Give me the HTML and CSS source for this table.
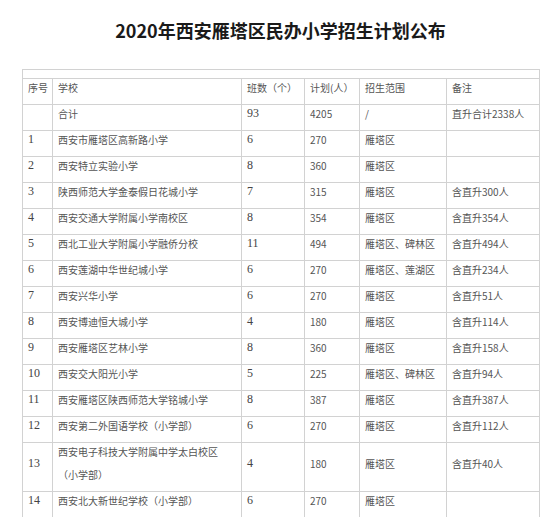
FILE: index.html
```html
<!DOCTYPE html>
<html lang="zh-CN">
<head>
<meta charset="utf-8">
<title>2020年西安雁塔区民办小学招生计划公布</title>
<link rel="stylesheet" href="styles.css">
</head>
<body>
<main class="article">
  <h1 class="title">2020年西安雁塔区民办小学招生计划公布</h1>
  <table class="grid">
    <colgroup>
      <col class="c-no"><col class="c-school"><col class="c-cls"><col class="c-plan"><col class="c-area"><col class="c-note">
    </colgroup>
    <tbody>
      <tr class="spacer"><td colspan="6"></td></tr>
      <tr><td><p>序号</p></td><td><p>学校</p></td><td><p>班数（个）</p></td><td><p>计划(人）</p></td><td><p>招生范围</p></td><td><p>备注</p></td></tr>
      <tr><td></td><td><p>合计</p></td><td class="num"><p>93</p></td><td><p>4205</p></td><td><p>/</p></td><td><p>直升合计2338人</p></td></tr>
      <tr><td class="num"><p>1</p></td><td><p>西安市雁塔区高新路小学</p></td><td class="num"><p>6</p></td><td><p>270</p></td><td><p>雁塔区</p></td><td></td></tr>
      <tr><td class="num"><p>2</p></td><td><p>西安特立实验小学</p></td><td class="num"><p>8</p></td><td><p>360</p></td><td><p>雁塔区</p></td><td></td></tr>
      <tr><td class="num"><p>3</p></td><td><p>陕西师范大学金泰假日花城小学</p></td><td class="num"><p>7</p></td><td><p>315</p></td><td><p>雁塔区</p></td><td><p>含直升300人</p></td></tr>
      <tr><td class="num"><p>4</p></td><td><p>西安交通大学附属小学南校区</p></td><td class="num"><p>8</p></td><td><p>354</p></td><td><p>雁塔区</p></td><td><p>含直升354人</p></td></tr>
      <tr><td class="num"><p>5</p></td><td><p>西北工业大学附属小学融侨分校</p></td><td class="num"><p>11</p></td><td><p>494</p></td><td><p>雁塔区、碑林区</p></td><td><p>含直升494人</p></td></tr>
      <tr><td class="num"><p>6</p></td><td><p>西安莲湖中华世纪城小学</p></td><td class="num"><p>6</p></td><td><p>270</p></td><td><p>雁塔区、莲湖区</p></td><td><p>含直升234人</p></td></tr>
      <tr><td class="num"><p>7</p></td><td><p>西安兴华小学</p></td><td class="num"><p>6</p></td><td><p>270</p></td><td><p>雁塔区</p></td><td><p>含直升51人</p></td></tr>
      <tr><td class="num"><p>8</p></td><td><p>西安博迪恒大城小学</p></td><td class="num"><p>4</p></td><td><p>180</p></td><td><p>雁塔区</p></td><td><p>含直升114人</p></td></tr>
      <tr><td class="num"><p>9</p></td><td><p>西安雁塔区艺林小学</p></td><td class="num"><p>8</p></td><td><p>360</p></td><td><p>雁塔区</p></td><td><p>含直升158人</p></td></tr>
      <tr><td class="num"><p>10</p></td><td><p>西安交大阳光小学</p></td><td class="num"><p>5</p></td><td><p>225</p></td><td><p>雁塔区、碑林区</p></td><td><p>含直升94人</p></td></tr>
      <tr><td class="num"><p>11</p></td><td><p>西安雁塔区陕西师范大学铭城小学</p></td><td class="num"><p>8</p></td><td><p>387</p></td><td><p>雁塔区</p></td><td><p>含直升387人</p></td></tr>
      <tr><td class="num"><p>12</p></td><td><p>西安第二外国语学校（小学部）</p></td><td class="num"><p>6</p></td><td><p>270</p></td><td><p>雁塔区</p></td><td><p>含直升112人</p></td></tr>
      <tr><td class="num"><p>13</p></td><td><p>西安电子科技大学附属中学太白校区<br>（小学部）</p></td><td class="num"><p>4</p></td><td><p>180</p></td><td><p>雁塔区</p></td><td><p>含直升40人</p></td></tr>
      <tr class="last"><td class="num"><p>14</p></td><td><p>西安北大新世纪学校（小学部）</p></td><td class="num"><p>6</p></td><td><p>270</p></td><td><p>雁塔区</p></td><td></td></tr>
    </tbody>
  </table>
</main>
</body>
</html>
```
FILE: styles.css
```css
html, body {
  margin: 0;
  padding: 0;
  background: #ffffff;
}

body {
  font-family: "Noto Sans CJK SC", "Noto Sans", sans-serif;
  color: #555555;
}

.article {
  width: 517px;
  margin: 0 0 0 22px;
  padding-top: 18px;
}

.title {
  margin: 0;
  font-size: 18px;
  line-height: 24px;
  font-weight: bold;
  color: #1a1a1a;
  text-align: center;
}

.grid {
  margin-top: 27px;
  width: 517px;
  table-layout: fixed;
  border-collapse: collapse;
  font-size: 10px;
  border: 1px solid #cfcfcf;
  border-bottom: none;
}

.c-no { width: 30px; }
.c-school { width: 189px; }
.c-cls { width: 63px; }
.c-plan { width: 55px; }
.c-area { width: 87px; }
.c-note { width: 93px; }

.grid td {
  border: 1px solid #d2d2d2;
  padding: 0 4px 5px 5px;
  line-height: 23px;
  vertical-align: middle;
  white-space: nowrap;
}

.grid td p {
  margin: -3px 0 0;
}

.grid .spacer td {
  height: 8px;
  padding: 0;
}

.grid .last td {
  border-bottom: none;
}

.grid td.num {
  font-family: "Liberation Serif", "Noto Sans CJK SC", serif;
  font-size: 12px;
  color: #444444;
}
```
